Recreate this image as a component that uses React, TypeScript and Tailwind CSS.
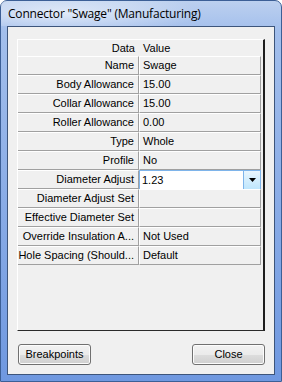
const rows: { label: string; value: string }[] = [
  { label: 'Name', value: 'Swage' },
  { label: 'Body Allowance', value: '15.00' },
  { label: 'Collar Allowance', value: '15.00' },
  { label: 'Roller Allowance', value: '0.00' },
  { label: 'Type', value: 'Whole' },
  { label: 'Profile', value: 'No' },
  { label: 'Diameter Adjust', value: '1.23' },
  { label: 'Diameter Adjust Set', value: '' },
  { label: 'Effective Diameter Set', value: '' },
  { label: 'Override Insulation A...', value: 'Not Used' },
  { label: 'Hole Spacing (Should...', value: 'Default' },
]

function Combo({ value }: { value: string }) {
  return (
    <div className="flex h-[20px] w-[122px] bg-white border border-[#7eb4ea]">
      <div className="flex-1 flex items-center pl-[2px]">{value}</div>
      <div className="w-[17px] flex items-center justify-center border-l border-[#7eb4ea] bg-gradient-to-b from-[#eaf6fd] to-[#bee6fd]">
        <svg width="7" height="4" viewBox="0 0 7 4">
          <path d="M0 0h7L3.5 4z" fill="#000" />
        </svg>
      </div>
    </div>
  )
}

function Button({ children }: { children: React.ReactNode }) {
  return (
    <button className="w-[73px] h-[21px] rounded-[3px] border border-[#707070] bg-[linear-gradient(#f2f2f2_0%,#ebebeb_50%,#dddddd_51%,#cfcfcf_100%)] text-[11px] text-black shadow-[inset_0_0_0_1px_#fcfcfc]">
      {children}
    </button>
  )
}

export default function App() {
  return (
    <div className="w-[282px] h-[382px] flex flex-col rounded-t-[7px] border border-[#3c5f96] bg-[linear-gradient(#bcd0ef,#a3bfec_30px,#6f98e0)] font-['Liberation_Sans',Arial,sans-serif] text-[11px] text-black">
      <div className="h-[25px] flex items-center pl-[7px] text-[12px] tracking-[-0.2px] font-['Open_Sans',sans-serif] bg-[radial-gradient(ellipse_140px_22px_at_60px_12px,rgba(255,255,255,0.6),transparent)]">
        Connector "Swage" (Manufacturing)
      </div>
      <div className="mx-[6px] mb-[6px] flex-1 flex flex-col border border-[#3d557b] bg-[#f0f0f0] px-[9px] pt-[12px] pb-[9px]">
        <div className="h-[292px] flex flex-col border-t border-l border-white border-r-2 border-b border-r-[#1e1e1e] border-b-[#2a2a2a]">
          <div className="flex h-[16px] items-center">
            <div className="w-[121px] text-right pr-[4px]">Data</div>
            <div className="pl-[4px]">Value</div>
          </div>
          {rows.map((r) => (
            <div key={r.label} className="flex h-[19px]">
              <div className="w-[121px] flex items-center justify-end pr-[4px] border-t border-white border-b border-r border-b-[#a0a0a0] border-r-[#a0a0a0] whitespace-nowrap overflow-hidden">
                {r.label}
              </div>
              {r.label === 'Diameter Adjust' ? (
                <Combo value={r.value} />
              ) : (
                <div className="w-[122px] flex items-center pl-[3px] border-t border-l border-white border-b border-r border-b-[#a0a0a0] border-r-[#a0a0a0]">
                  {r.value}
                </div>
              )}
            </div>
          ))}
        </div>
        <div className="mt-[13px] flex justify-between pl-[1px]">
          <Button>Breakpoints</Button>
          <Button>Close</Button>
        </div>
      </div>
    </div>
  )
}
